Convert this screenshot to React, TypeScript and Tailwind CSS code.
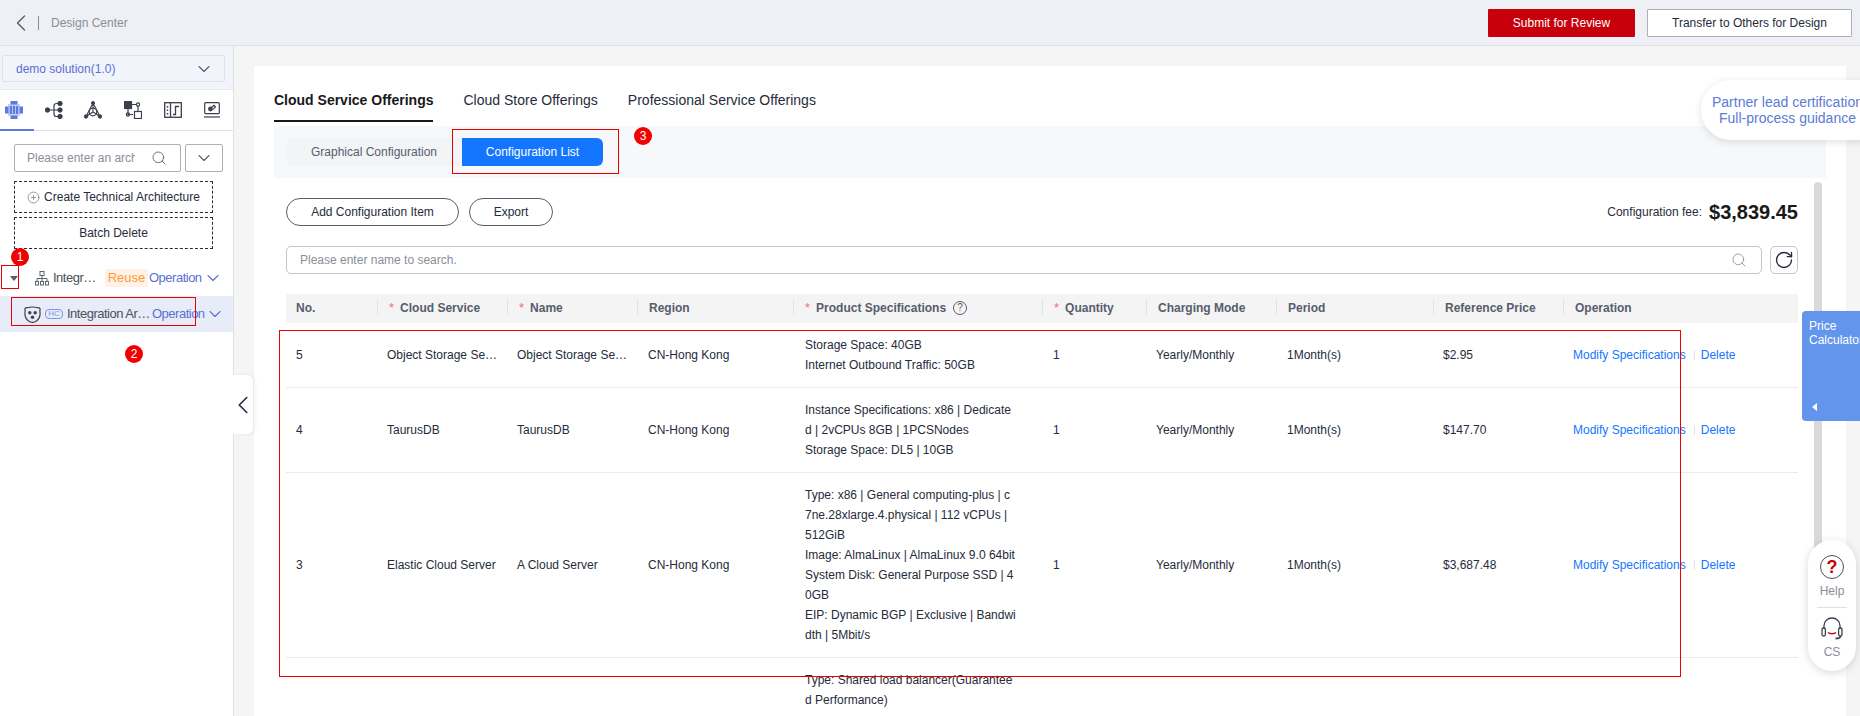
import React from 'react';
import { ChevronDown, ChevronLeft, CirclePlus, RotateCw, Search } from 'lucide-react';

// ---- sidebar tab icons ----

const ClusterIcon = () => (
  <svg width="18" height="18" viewBox="0 0 18 18" fill="#5b7be0">
    <rect x="3" y="3" width="12" height="12" fill="#c3cff5" />
    <rect x="5.500" y="0" width="7" height="3.500" />
    <rect x="5.500" y="14.500" width="7" height="3.500" />
    <rect x="0" y="5.500" width="3.500" height="7" />
    <rect x="14.500" y="5.500" width="3.500" height="7" />
    <rect x="4.800" y="5" width="2.200" height="8" />
    <rect x="7.900" y="5" width="2.200" height="8" />
    <rect x="11" y="5" width="2.200" height="8" />
  </svg>
);

const TreeIcon = () => (
  <svg width="18" height="18" viewBox="0 0 18 18" fill="#3a3f4d" stroke="#3a3f4d">
    <circle cx="2.500" cy="9" r="2.200" />
    <circle cx="15" cy="2.500" r="2.200" />
    <circle cx="15" cy="9" r="2.200" />
    <circle cx="15" cy="15.500" r="2.200" />
    <path d="M3 9h12M15 2.500h-3.500Q9 2.500 9 5v8q0 2.500 2.500 2.500H15" fill="none" strokeWidth="1.200" />
  </svg>
);

const TriangleNodesIcon = () => (
  <svg width="18" height="18" viewBox="0 0 18 18" fill="#3a3f4d" stroke="#3a3f4d">
    <circle cx="9" cy="2" r="1.500" />
    <circle cx="2" cy="15.500" r="1.700" />
    <circle cx="16" cy="15.500" r="1.700" />
    <path d="M9 2v9M2 15.500L9 2l7 13.500M2 15.500l7-4.500 7 4.500" fill="none" strokeWidth="1.100" />
    <circle cx="9" cy="11" r="3.800" fill="none" strokeWidth="1.200" />
  </svg>
);

const FlowIcon = () => (
  <svg width="18" height="18" viewBox="0 0 18 18" fill="none" stroke="#3a3f4d" strokeWidth="1.200">
    <rect x="0.500" y="0.500" width="7" height="7" fill="#3a3f4d" />
    <path d="M8 3.500h5M4 8v5.500h5M14 5v5" />
    <circle cx="14" cy="3.500" r="1.600" />
    <circle cx="4" cy="13.500" r="1.600" />
    <rect x="10.500" y="10.500" width="7" height="7" />
  </svg>
);

const StepIcon = () => (
  <svg width="18" height="16" viewBox="0 0 18 16" fill="none" stroke="#3a3f4d" strokeWidth="1.300">
    <rect x="0.700" y="0.700" width="16.600" height="14.600" />
    <path d="M6.500 1v14" />
    <path d="M3.500 4v1.500M3.500 7.500V9M3.500 11v1.500" strokeWidth="1.500" />
    <path d="M9 12.500h2.500V4.500H15" />
  </svg>
);

const LaptopIcon = () => (
  <svg width="16" height="16" viewBox="0 0 16 16" fill="none" stroke="#3a3f4d" strokeWidth="1.200">
    <rect x="0.700" y="0.700" width="14.600" height="11" rx="1" />
    <path d="M0 15h16" />
    <circle cx="6.500" cy="7" r="1.800" fill="#3a3f4d" />
    <path d="M7.500 5.500l2.500-2.200 1.500 1.500-2.200 2.500" />
  </svg>
);

const HierarchyIcon = () => (
  <svg width="14" height="15" viewBox="0 0 14 15" fill="none" stroke="#5e6373" strokeWidth="1">
    <rect x="5" y="0.500" width="4" height="4" />
    <rect x="0.500" y="10.500" width="3" height="3.500" />
    <rect x="5.500" y="10.500" width="3" height="3.500" />
    <rect x="10.500" y="10.500" width="3" height="3.500" />
    <path d="M7 4.500v6M2 10.500V7.500h10v3" />
  </svg>
);

const BadgeShieldIcon = () => (
  <svg width="17" height="17" viewBox="0 0 17 17" fill="#3d4252">
    <path d="M3.500 1.800C6 .8 11 .8 13.500 1.800 15.500 1 16.800 3 15.800 4.800c.8 4-.4 7.800-3 9.900-2.800 2.200-5.800 2.200-8.600 0-2.600-2.100-3.800-5.900-3-9.900C.2 3 1.500 1 3.500 1.800z" fill="none" stroke="#3d4252" strokeWidth="1.200" />
    <circle cx="5.800" cy="6.800" r="1.700" />
    <circle cx="11.200" cy="6.800" r="1.700" />
    <circle cx="8.500" cy="11.300" r="1.700" />
  </svg>
);

const HeadsetIcon = () => (
  <svg width="24" height="24" viewBox="0 0 24 24" fill="none" stroke="#3d4252" strokeWidth="1.300">
    <path d="M4 12V8.500a8 7.500 0 0 1 16 0V12" />
    <rect x="2" y="11" width="3.400" height="8" rx="1.500" />
    <rect x="18.600" y="11" width="3.400" height="8" rx="1.500" />
    <path d="M8 15.500c2 1.600 6 1.600 8 0" stroke="#c7000b" strokeWidth="1.500" />
    <path d="M20.500 19c0 2-1.500 2.500-5 2.500" strokeWidth="1.800" />
  </svg>
);

// ---- data ----

const SIDEBAR_TABS = [
  { key: 'cluster', icon: <ClusterIcon /> },
  { key: 'tree', icon: <TreeIcon /> },
  { key: 'triangle', icon: <TriangleNodesIcon /> },
  { key: 'flow', icon: <FlowIcon /> },
  { key: 'step', icon: <StepIcon /> },
  { key: 'laptop', icon: <LaptopIcon /> },
];

const COLUMNS = [
  { title: 'No.', width: 'w-[91px]' },
  { title: 'Cloud Service', width: 'w-[130px]', required: true },
  { title: 'Name', width: 'w-[130px]', required: true },
  { title: 'Region', width: 'w-[156px]' },
  { title: 'Product Specifications', width: 'w-[249px]', required: true, help: true },
  { title: 'Quantity', width: 'w-[104px]', required: true },
  { title: 'Charging Mode', width: 'w-[130px]' },
  { title: 'Period', width: 'w-[157px]' },
  { title: 'Reference Price', width: 'w-[130px]' },
  { title: 'Operation', width: 'w-[235px]' },
];

const ROWS = [
  {
    no: '5',
    service: 'Object Storage Service',
    name: 'Object Storage Service',
    specs: ['Storage Space: 40GB', 'Internet Outbound Traffic: 50GB'],
    price: '$2.95',
  },
  {
    no: '4',
    service: 'TaurusDB',
    name: 'TaurusDB',
    specs: ['Instance Specifications: x86 | Dedicated | 2vCPUs 8GB | 1PCSNodes', 'Storage Space: DL5 | 10GB'],
    price: '$147.70',
  },
  {
    no: '3',
    service: 'Elastic Cloud Server',
    name: 'A Cloud Server',
    specs: [
      'Type: x86 | General computing-plus | c7ne.28xlarge.4.physical | 112 vCPUs | 512GiB',
      'Image: AlmaLinux | AlmaLinux 9.0 64bit',
      'System Disk: General Purpose SSD | 40GB',
      'EIP: Dynamic BGP | Exclusive | Bandwidth | 5Mbit/s',
    ],
    price: '$3,687.48',
  },
  {
    no: '',
    service: '',
    name: '',
    specs: ['Type: Shared load balancer(Guaranteed Performance)'],
    price: '',
  },
];

const Marker = ({ n, className }: { n: number; className: string }) => (
  <span className={`absolute z-40 flex h-[18px] w-[18px] items-center justify-center rounded-full bg-[#f00000] text-xs text-white ${className}`}>
    {n}
  </span>
);

export default function App() {
  return (
    <div className="relative flex h-[716px] w-[1860px] flex-col overflow-hidden bg-[#f5f5f5] font-['Liberation_Sans',Arial,sans-serif] text-xs text-[#252b3a]">
      {/* top bar */}
      <header className="flex h-[46px] shrink-0 items-center border-b border-[#dfe1e6] bg-[#eef0f5] pr-2">
        <ChevronLeft className="ml-[7px] h-7 w-7 shrink-0 text-[#575d6c]" strokeWidth={1.200} />
        <span className="ml-[3px] h-[14px] w-px bg-[#8a8e99]" />
        <span className="ml-3 text-xs text-[#8a8e99]">Design Center</span>
        <button className="ml-auto h-7 w-[147px] rounded-[1px] bg-[#c7000b] text-xs text-white">Submit for Review</button>
        <button className="ml-3 h-7 w-[205px] rounded-[1px] border border-[#adb0b8] bg-white text-xs text-[#252b3a]">
          Transfer to Others for Design
        </button>
      </header>

      <div className="flex min-h-0 flex-1">
        {/* left panel */}
        <aside className="flex w-[234px] shrink-0 flex-col border-r border-[#dfe1e6] bg-white">
          <div className="bg-[#f2f4fb] px-[2px] pb-[7px] pt-[9px]">
            <div className="flex h-[27px] w-[223px] items-center justify-between rounded-[2px] border border-[#dfe1e6] pl-[13px] pr-[10px] text-xs text-[#5b6fd4]">
              demo solution(1.0)
              <ChevronDown className="h-5 w-5 text-[#575d6c]" strokeWidth={1.300} />
            </div>
          </div>
          <div className="flex h-[42px] items-center border-y border-b-[#dfe1e6] border-t-[#e8eaef] pb-[1px]">
            {SIDEBAR_TABS.map((tab, i) => (
              <div key={tab.key} className={`relative flex h-full w-[39.700px] items-center justify-center ${i === 0 ? '-ml-[6px]' : ''}`}>
                {tab.icon}
              </div>
            ))}
          </div>
          <div className="relative -mt-[2px] ml-0 h-[2px] w-[34px] bg-[#5b7be0]" />

          <div className="mt-[13px] flex pl-[14px]">
            <div className="flex h-7 w-[167px] shrink-0 items-center rounded-[2px] border border-[#adb0b8] pl-[12px] pr-[13px]">
              <span className="w-[108px] overflow-hidden whitespace-nowrap text-[#8a8e99]">Please enter an architecture</span>
              <Search className="ml-auto h-4 w-4 text-[#575d6c]" strokeWidth={1.300} />
            </div>
            <div className="ml-[4px] flex h-7 w-[38px] shrink-0 items-center justify-center rounded-[2px] border border-[#adb0b8]">
              <ChevronDown className="h-5 w-5 text-[#575d6c]" strokeWidth={1.300} />
            </div>
          </div>

          <div className="mt-[9px] flex flex-col gap-[4px] px-[14px]">
            <button className="flex h-[32px] w-[199px] items-center justify-center gap-[4px] border border-dashed border-[#252b3a] text-xs">
              <CirclePlus className="h-[13px] w-[13px] text-[#575d6c]" strokeWidth={1.100} />
              Create Technical Architecture
            </button>
            <button className="h-[32px] w-[199px] border border-dashed border-[#252b3a] text-xs">Batch Delete</button>
          </div>

          <div className="mt-[11px] flex h-[36px] items-center pl-[10px]">
            <span className="h-0 w-0 shrink-0 border-x-[4px] border-t-[5px] border-x-transparent border-t-[#575d6c]" />
            <span className="ml-[17px] shrink-0"><HierarchyIcon /></span>
            <span className="ml-[4px] w-[49px] shrink-0 truncate text-[13px] tracking-[-0.500px] text-[#4e5058]">Integration Architecture</span>
            <span className="ml-[3px] flex h-[18px] w-[43px] shrink-0 items-center justify-center rounded-[2px] bg-[#fff2e5] text-[13px] text-[#ff9a3e]">Reuse</span>
            <span className="ml-[1px] shrink-0 text-[13px] tracking-[-0.500px] text-[#5b6fd4]">Operation</span>
            <ChevronDown className="ml-[1px] h-5 w-5 shrink-0 text-[#5b6fd4]" strokeWidth={1.300} />
          </div>
          <div className="flex h-[36px] items-center bg-[#e8ecf8] pl-[24px]">
            <span className="shrink-0"><BadgeShieldIcon /></span>
            <span className="ml-[4px] flex h-[10px] w-[18px] shrink-0 items-center justify-center rounded-[4px] border border-[#7d93e4] text-[8px] text-[#7d93e4]">HC</span>
            <span className="ml-[4px] w-[84px] shrink-0 truncate text-[13px] tracking-[-0.500px] text-[#4e5058]">Integration Architecture</span>
            <span className="ml-[1px] shrink-0 text-[13px] tracking-[-0.500px] text-[#5b6fd4]">Operation</span>
            <ChevronDown className="h-5 w-5 shrink-0 text-[#5b6fd4]" strokeWidth={1.300} />
          </div>
        </aside>

        {/* content card */}
        <main className="ml-[20px] mr-[14px] mt-[20px] flex min-w-0 flex-1 flex-col overflow-hidden bg-white px-[20px] text-xs">
          <nav className="flex h-[56px] shrink-0 items-end gap-[30px] text-sm">
            <span className="border-b-2 border-[#191919] pb-[10px] font-bold text-[#191919]">Cloud Service Offerings</span>
            <span className="pb-[12px] text-[#252b3a]">Cloud Store Offerings</span>
            <span className="pb-[12px] text-[#252b3a]">Professional Service Offerings</span>
          </nav>

          <div className="mt-[4px] flex h-[52px] shrink-0 items-center bg-[#f7f8fa] pl-[12px]">
            <div className="flex h-7 w-[176px] items-center justify-center rounded-l-[6px] bg-[#f3f4f6] text-[#575d6c]">Graphical Configuration</div>
            <div className="flex h-7 w-[141px] items-center justify-center rounded-r-[6px] bg-[#1476ff] text-white">Configuration List</div>
          </div>

          <div className="flex shrink-0 flex-col pl-[12px] pr-[28px]">
            <div className="mt-[20px] flex h-7 items-center">
              <button className="h-7 w-[173px] rounded-full border border-[#575d6c] text-xs">Add Configuration Item</button>
              <button className="ml-[10px] h-7 w-[84px] rounded-full border border-[#575d6c] text-xs">Export</button>
              <span className="ml-auto text-xs">Configuration fee:</span>
              <span className="ml-[7px] text-[20px] font-bold text-[#191919]">$3,839.45</span>
            </div>

            <div className="mt-[20px] flex items-center">
              <div className="flex h-7 w-[1476px] items-center rounded-[5px] border border-[#c4c6cc] pl-[13px] pr-[14px] text-[#8a8e99]">
                Please enter name to search.
                <Search className="ml-auto h-4 w-4" strokeWidth={1.300} />
              </div>
              <div className="ml-[8px] flex h-7 w-7 items-center justify-center rounded-[5px] border border-[#c4c6cc]">
                <RotateCw className="h-5 w-5 text-[#252b3a]" strokeWidth={1.600} />
              </div>
            </div>

            <table className="mt-[20px] w-[1512px] table-fixed border-collapse">
              <thead>
                <tr className="h-[29px] bg-[#f4f4f4]">
                  {COLUMNS.map((col, i) => (
                    <th key={col.title} className={`${col.width} p-0 text-left font-bold text-[#575d6c]`}>
                      <div className={`-mt-[2px] flex h-[15px] items-center ${i === 0 ? 'pl-[10px]' : 'border-l border-[#dfe1e6] pl-[11px]'}`}>
                        {col.required && <span className="mr-[6px] text-[13px] font-normal text-[#f66f6a]">*</span>}
                        {col.title}
                        {col.help && (
                          <span className="ml-[7px] flex h-[14px] w-[14px] items-center justify-center rounded-full border border-[#575d6c] text-[10px] font-normal">?</span>
                        )}
                      </div>
                    </th>
                  ))}
                </tr>
              </thead>
              <tbody>
                {ROWS.map((row, i) => (
                  <tr key={i} className="border-b border-[#ebebeb] leading-5">
                    <td className="pl-[10px]">{row.no}</td>
                    <td className="truncate pl-[10px] pr-[8px]">{row.service}</td>
                    <td className="truncate pl-[10px] pr-[8px]">{row.name}</td>
                    <td className="pl-[11px]">{row.no && 'CN-Hong Kong'}</td>
                    <td className="py-3 pl-[12px] pr-[26px]">
                      {row.specs.map(line => (
                        <div key={line} className="break-all">{line}</div>
                      ))}
                    </td>
                    <td className="pl-[11px]">{row.no && '1'}</td>
                    <td className="pl-[10px]">{row.no && 'Yearly/Monthly'}</td>
                    <td className="pl-[11px]">{row.no && '1Month(s)'}</td>
                    <td className="pl-[10px]">{row.price}</td>
                    <td className="pl-[10px]">
                      {row.no && (
                        <div className="flex items-center text-[#1476ff]">
                          Modify Specifications
                          <span className="ml-[8px] h-[10px] w-px bg-[#dfe1e6]" />
                          <span className="ml-[6px]">Delete</span>
                        </div>
                      )}
                    </td>
                  </tr>
                ))}
              </tbody>
            </table>
          </div>
        </main>
      </div>

      {/* collapse handle */}
      <div className="absolute left-[233px] top-[375px] flex h-[59px] w-[20px] items-center justify-center rounded-r-[6px] bg-white shadow-[2px_0_4px_rgba(0,0,0,0.06)]">
        <ChevronLeft className="h-[30px] w-[30px] shrink-0 text-[#252b3a]" strokeWidth={1.300} />
      </div>

      {/* card scrollbar */}
      <div className="absolute left-[1814px] top-[182px] h-[480px] w-[8px] rounded-full bg-[#d9d9d9]" />

      {/* floating widgets */}
      <div className="absolute left-[1701px] top-[80px] flex h-[60px] w-[190px] flex-col justify-center rounded-[30px] bg-white pl-[11px] text-sm leading-4 text-[#5b7bd5] shadow-[0_2px_8px_rgba(0,0,0,0.12)]">
        <span className="whitespace-nowrap">Partner lead certification</span>
        <span className="whitespace-nowrap pl-[7px]">Full-process guidance</span>
      </div>
      <div className="absolute left-[1802px] top-[311px] h-[110px] w-[70px] rounded-l-[4px] bg-[#6495ed] pl-[7px] pt-[8px] text-xs leading-[14px] text-white">
        Price<br />Calculator
        <span className="absolute bottom-[10px] left-[10px] h-0 w-0 border-y-[4px] border-r-[5px] border-y-transparent border-r-white" />
      </div>
      <div className="absolute left-[1808px] top-[540px] flex h-[131px] w-[48px] flex-col items-center rounded-[24px] bg-white pt-[15px] shadow-[0_2px_10px_rgba(0,0,0,0.15)]">
        <span className="flex h-6 w-6 items-center justify-center rounded-full border-[1.5px] border-[#4e5058] text-[18px] font-bold leading-none text-[#c7000b]">?</span>
        <span className="mt-[4px] text-xs text-[#8a8e99]">Help</span>
        <span className="mt-[8px] h-px w-[30px] bg-[#dfe1e6]" />
        <span className="mt-[9px]"><HeadsetIcon /></span>
        <span className="mt-[3px] text-xs text-[#8a8e99]">CS</span>
      </div>

      {/* red annotations */}
      <div className="absolute left-[1px] top-[265px] h-[24px] w-[18px] border border-[#e60000]" />
      <div className="absolute left-[11px] top-[297px] h-[29px] w-[185px] border border-[#e60000]" />
      <div className="absolute left-[452px] top-[129px] h-[45px] w-[167px] border border-[#e60000]" />
      <div className="absolute left-[279px] top-[330px] h-[347px] w-[1402px] border border-[#f00000]" />
      <Marker n={1} className="left-[11px] top-[248px]" />
      <Marker n={2} className="left-[125px] top-[345px]" />
      <Marker n={3} className="left-[634px] top-[127px]" />
    </div>
  );
}
